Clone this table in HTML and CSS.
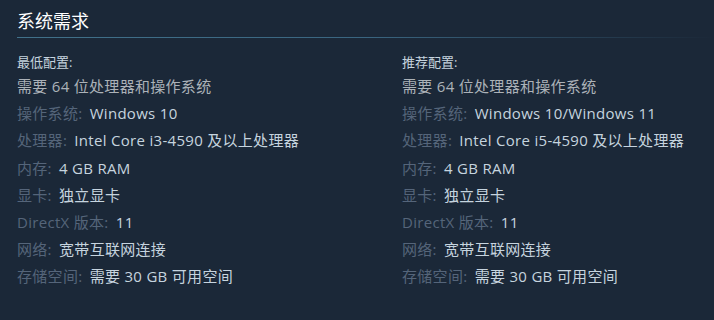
FILE: index.html
```html
<!DOCTYPE html>
<html lang="zh-CN">
<head>
<meta charset="utf-8">
<title>系统需求</title>
<link rel="stylesheet" href="styles.css">
</head>
<body>
<div class="sysreq">
  <h2 class="sysreq-title">系统需求</h2>
  <div class="sysreq-cols">
    <div class="sysreq-col">
      <div class="col-title">最低配置:</div>
      <ul class="req-list">
        <li><span class="val">需要 64 位处理器和操作系统</span></li>
        <li><span class="lbl">操作系统:</span> <span class="val">Windows 10</span></li>
        <li><span class="lbl">处理器:</span> <span class="val">Intel Core i3-4590 及以上处理器</span></li>
        <li><span class="lbl">内存:</span> <span class="val">4 GB RAM</span></li>
        <li><span class="lbl">显卡:</span> <span class="val">独立显卡</span></li>
        <li><span class="lbl">DirectX 版本:</span> <span class="val">11</span></li>
        <li><span class="lbl">网络:</span> <span class="val">宽带互联网连接</span></li>
        <li><span class="lbl">存储空间:</span> <span class="val">需要 30 GB 可用空间</span></li>
      </ul>
    </div>
    <div class="sysreq-col">
      <div class="col-title">推荐配置:</div>
      <ul class="req-list">
        <li><span class="val">需要 64 位处理器和操作系统</span></li>
        <li><span class="lbl">操作系统:</span> <span class="val">Windows 10/Windows 11</span></li>
        <li><span class="lbl">处理器:</span> <span class="val">Intel Core i5-4590 及以上处理器</span></li>
        <li><span class="lbl">内存:</span> <span class="val">4 GB RAM</span></li>
        <li><span class="lbl">显卡:</span> <span class="val">独立显卡</span></li>
        <li><span class="lbl">DirectX 版本:</span> <span class="val">11</span></li>
        <li><span class="lbl">网络:</span> <span class="val">宽带互联网连接</span></li>
        <li><span class="lbl">存储空间:</span> <span class="val">需要 30 GB 可用空间</span></li>
      </ul>
    </div>
  </div>
</div>
</body>
</html>
```
FILE: styles.css
```css
html, body {
  margin: 0;
  padding: 0;
  background: #1b2838;
}
body {
  font-family: "Open Sans", "Noto Sans CJK SC", sans-serif;
  color: #acb2b8;
}
.sysreq {
  padding-left: 17px;
}
.sysreq-title {
  margin: 9px 0 0 0;
  font-size: 18px;
  line-height: 24px;
  font-weight: normal;
  color: #ffffff;
  background-image: linear-gradient(to right, #41718a 0%, #3a6580 50%, rgba(27, 40, 56, 0) 100%);
  background-repeat: no-repeat;
  background-position: left bottom;
  background-size: 100% 1px;
  padding-bottom: 5px;
}
.sysreq-cols {
  display: grid;
  grid-template-columns: 385px 1fr;
}
.col-title {
  margin-top: 15px;
  font-size: 13px;
  line-height: 18px;
  color: #c6d4df;
  margin-bottom: 2px;
}
.req-list {
  list-style: none;
  margin: 0;
  padding: 0;
}
.req-list li {
  font-size: 15px;
  line-height: 27.2px;
  white-space: nowrap;
  letter-spacing: 0.3px;
}
.lbl {
  color: #55657a;
  margin-right: 3px;
}
.val {
  color: #c6d4df;
}
.req-list li:first-child .val {
  color: #acb2b8;
}
```
